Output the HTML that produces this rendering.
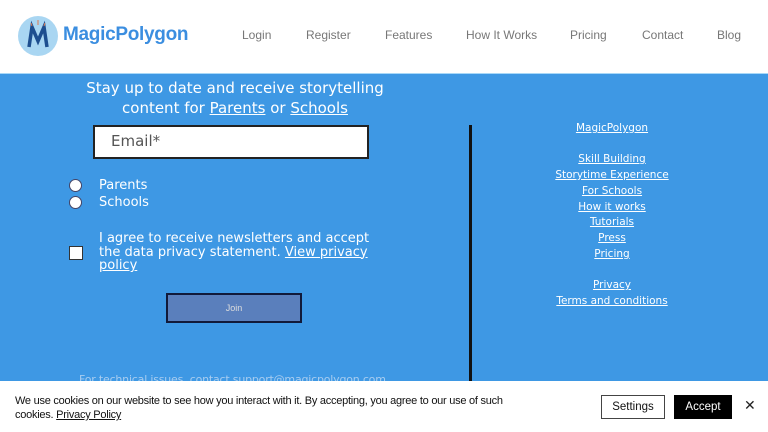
<!DOCTYPE html>
<html><head><style>
*{margin:0;padding:0;box-sizing:border-box}
body{width:768px;height:432px;overflow:hidden;font-family:"Liberation Sans",sans-serif;background:#3e98e4;position:relative}
.hdr{position:absolute;left:0;top:0;width:768px;height:74px;background:#fff;border-bottom:1px solid #a8d8f8}
.logo{position:absolute;left:18px;top:16px;width:40px;height:40px;border-radius:50%;background:#a9d6f2}
.brand{position:absolute;left:63px;top:24px;font-size:19px;font-weight:bold;color:#3b8ee0;letter-spacing:-0.3px}
.nav{position:absolute;top:28px;font-size:12px;color:#777}
.a{position:absolute;color:#fff;font-family:"DejaVu Sans",sans-serif}
u{text-decoration:underline}
.lnk{position:absolute;left:612px;transform:translateX(-50%);font-size:10.5px;color:#fff;text-decoration:underline;white-space:nowrap;font-family:"DejaVu Sans",sans-serif}
</style></head><body>
<div class="hdr">
<div class="logo"><svg width="40" height="40" viewBox="0 0 40 40"><path d="M11 31 L14 11 L20 25 L26 11 L29 31" fill="none" stroke="#1d4e8f" stroke-width="3.5" stroke-linejoin="miter"/><path d="M20 4 V9 M13 7 L14 10 M27 7 L26 10" stroke="#e07a50" stroke-width="1"/></svg></div>
<div class="brand">MagicPolygon</div>
<div class="nav" style="left:242px">Login</div>
<div class="nav" style="left:306px">Register</div>
<div class="nav" style="left:385px">Features</div>
<div class="nav" style="left:466px">How It Works</div>
<div class="nav" style="left:570px">Pricing</div>
<div class="nav" style="left:642px">Contact</div>
<div class="nav" style="left:717px">Blog</div>
</div>
<div class="a" style="left:70px;top:78px;width:330px;text-align:center;font-size:15px;line-height:20px">Stay up to date and receive storytelling content for <u>Parents</u> or <u>Schools</u></div>
<div style="position:absolute;left:93px;top:125px;width:276px;height:34px;background:#fff;border:2px solid #222;font-family:'DejaVu Sans',sans-serif;font-size:15px;color:#555;padding:5px 0 0 16px">Email*</div>
<div style="position:absolute;left:69px;top:179px;width:13px;height:13px;border-radius:50%;background:#fff;border:1px solid #446"></div>
<div style="position:absolute;left:69px;top:196px;width:13px;height:13px;border-radius:50%;background:#fff;border:1px solid #446"></div>
<div class="a" style="left:99px;top:178px;font-size:13px">Parents</div>
<div class="a" style="left:99px;top:195px;font-size:13px">Schools</div>
<div style="position:absolute;left:69px;top:246px;width:14px;height:14px;background:#fff;border:1px solid #333"></div>
<div class="a" style="left:99px;top:232px;width:290px;font-size:13px;line-height:13.5px">I agree to receive newsletters and accept the data privacy statement. <u>View privacy policy</u></div>
<div style="position:absolute;left:166px;top:293px;width:136px;height:30px;background:#5a7fbc;border:2px solid #111a3a;color:#ddd;font-size:9px;text-align:center;line-height:26px">Join</div>
<div class="a" style="left:79px;top:373px;font-size:11px;color:#a8cdf0;letter-spacing:-0.2px">For technical issues, contact support@magicpolygon.com</div>
<div style="position:absolute;left:469px;top:125px;width:3px;height:260px;background:#111"></div>
<div class="lnk" style="top:122px">MagicPolygon</div>
<div class="lnk" style="top:153px">Skill Building</div>
<div class="lnk" style="top:169px">Storytime Experience</div>
<div class="lnk" style="top:185px">For Schools</div>
<div class="lnk" style="top:201px">How it works</div>
<div class="lnk" style="top:216px">Tutorials</div>
<div class="lnk" style="top:232px">Press</div>
<div class="lnk" style="top:248px">Pricing</div>
<div class="lnk" style="top:279px">Privacy</div>
<div class="lnk" style="top:295px">Terms and conditions</div>
<div style="position:absolute;left:0;top:381px;width:768px;height:51px;background:#fff"></div>
<div style="position:absolute;left:15px;top:394px;width:520px;font-size:11px;line-height:14px;color:#111;letter-spacing:-0.25px">We use cookies on our website to see how you interact with it. By accepting, you agree to our use of such cookies. <u>Privacy Policy</u></div>
<div style="position:absolute;left:601px;top:395px;width:64px;height:24px;border:1px solid #444;font-size:11.5px;text-align:center;line-height:22px;color:#111">Settings</div>
<div style="position:absolute;left:674px;top:395px;width:58px;height:24px;background:#000;color:#fff;font-size:11.5px;text-align:center;line-height:24px">Accept</div>
<div style="position:absolute;left:744px;top:397px;font-size:14px;color:#222">✕</div>
</body></html>
